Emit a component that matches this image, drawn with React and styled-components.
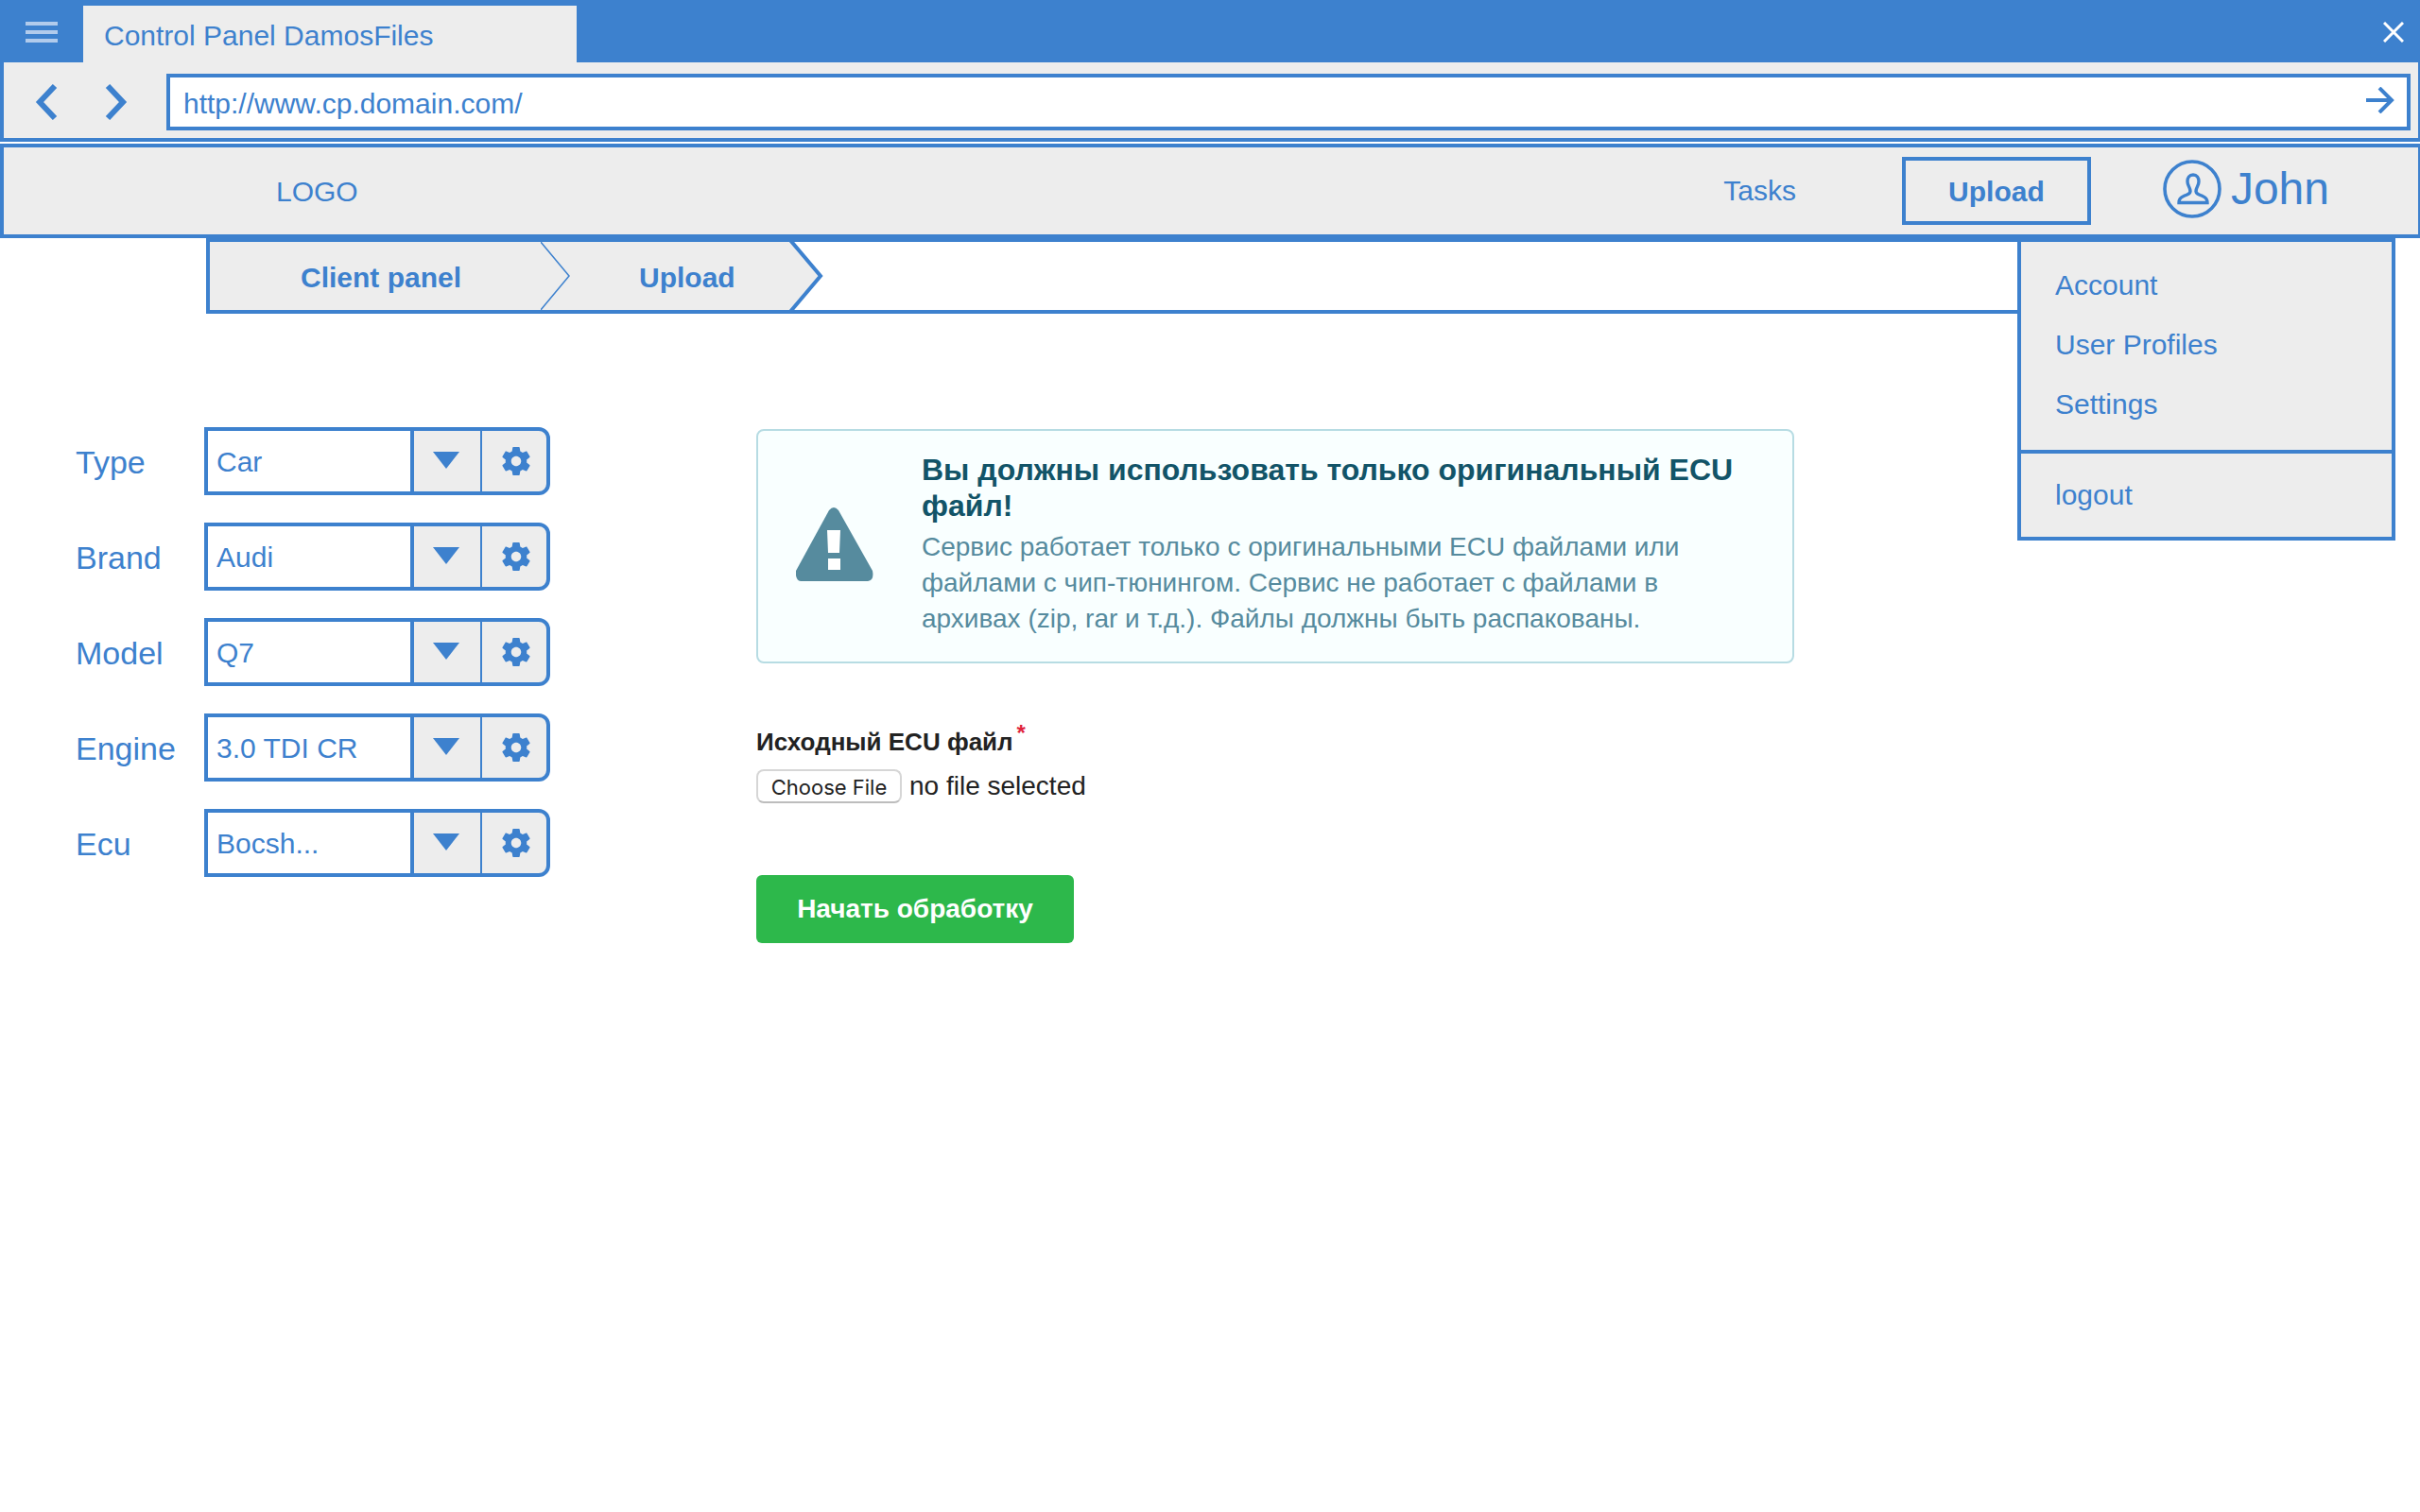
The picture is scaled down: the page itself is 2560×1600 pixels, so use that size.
import React from "react";
import styled, { createGlobalStyle } from "styled-components";

const blue = "#3d81ce";
const grey = "#ededed";

const GlobalStyle = createGlobalStyle`
  *, *::before, *::after { box-sizing: border-box; }
  body {
    margin: 0;
    background: #fff;
    color: ${blue};
    font: 30px/36px "Liberation Sans", Arial, sans-serif;
  }
  button, input, select { font: inherit; color: inherit; margin: 0; }
  button { cursor: pointer; }
  a { color: inherit; text-decoration: none; }
  svg { display: block; flex: none; }
  h1, h2, p, ul, ol { margin: 0; padding: 0; list-style: none; font-size: inherit; }
`;

const TitleBar = styled.div`
  display: flex;
  align-items: flex-end;
  height: 66px;
  background: ${blue};
`;

const IconButton = styled.button`
  display: flex;
  align-items: center;
  justify-content: center;
  width: ${(p) => p.$width}px;
  height: 60px;
  padding: 0;
  border: 0;
  background: transparent;
  color: ${(p) => p.$color || blue};
`;

const MenuButton = styled(IconButton)`
  height: 64px;
`;

const CloseButton = styled(MenuButton)`
  margin-left: auto;
`;

const BrowserTab = styled.div`
  display: flex;
  align-items: center;
  width: 522px;
  height: 60px;
  padding: 4px 22px 0;
  background: ${grey};
`;

const AddressBar = styled.div`
  display: flex;
  align-items: center;
  height: 84px;
  padding: 4px 8px 0;
  border: solid ${blue};
  border-width: 0 2px 4px 4px;
  background: ${grey};
`;

const HistoryButtons = styled.div`
  display: flex;
  width: 164px;
`;

const AddressField = styled.form`
  display: flex;
  flex: 1;
  height: 60px;
  border: 4px solid ${blue};
  background: #fff;
`;

const AddressInput = styled.input`
  flex: 1;
  min-width: 0;
  padding: 4px 14px 0;
  border: 0;
  outline: 0;
  background: transparent;
`;

const GoButton = styled(IconButton)`
  height: 48px;
`;

const SiteHeader = styled.header`
  position: relative;
  display: flex;
  align-items: center;
  height: 100px;
  margin-top: 2px;
  padding: 0 94px 0 288px;
  border: solid ${blue};
  border-width: 4px 2px 4px 4px;
  background: ${grey};
`;

const Logo = styled.a`
  margin-right: auto;
  padding-top: 2px;
`;

const HeaderNav = styled.nav`
  display: flex;
  align-items: center;
`;

const UploadButton = styled.button`
  width: 200px;
  height: 72px;
  margin: 0 76px 0 112px;
  padding: 2px 0 0;
  border: 4px solid ${blue};
  background: transparent;
  font-weight: bold;
`;

const UserButton = styled.button`
  display: flex;
  align-items: center;
  gap: 10px;
  padding: 0 0 4px;
  border: 0;
  background: transparent;
  font-size: 48px;
  line-height: 56px;
`;

const UserMenu = styled.div`
  position: absolute;
  z-index: 1;
  top: 96px;
  right: 24px;
  width: 400px;
  border: 4px solid ${blue};
  background: ${grey};
`;

const MenuGroup = styled.ul`
  display: flex;
  flex-direction: column;
  gap: 27px;
  padding: 28px 36px 30px;
  & + & {
    padding: 26px 36px;
    border-top: 4px solid ${blue};
  }
`;

const Breadcrumbs = styled.nav`
  margin: 0 400px 0 218px;
  border: 4px solid ${blue};
`;

const CrumbList = styled.ol`
  display: flex;
  height: 72px;
`;

const Crumb = styled.li`
  display: flex;
  font-weight: bold;
`;

const CrumbLink = styled.a`
  display: flex;
  align-items: center;
  padding: 4px 0 0 ${(p) => p.$left}px;
  width: ${(p) => p.$width}px;
  background: ${grey};
`;

const Main = styled.main`
  display: flex;
  align-items: flex-start;
  gap: 218px;
  padding: 120px 40px 40px 80px;
`;

const VehicleForm = styled.form`
  display: flex;
  flex-direction: column;
  gap: 29px;
  flex: none;
  width: 502px;
`;

const Field = styled.div`
  display: flex;
  align-items: center;
  justify-content: space-between;
`;

const FieldLabel = styled.label`
  padding-top: 2px;
  font-size: 34px;
  line-height: 40px;
`;

const Combo = styled.div`
  display: flex;
  width: 366px;
  height: 72px;
  border: 4px solid ${blue};
  border-radius: 0 12px 12px 0;
  background: ${grey};
  overflow: hidden;
`;

const SelectArea = styled.div`
  display: grid;
  grid-template-columns: 218px 70px;
`;

const Select = styled.select`
  grid-area: 1 / 1 / 2 / 3;
  padding: 2px 78px 0 9px;
  border: 0;
  outline: 0;
  appearance: none;
  background: linear-gradient(to right, #fff 214px, ${blue} 214px 218px, ${grey} 218px);
`;

const SelectArrow = styled.span`
  grid-area: 1 / 2;
  display: flex;
  align-items: center;
  justify-content: center;
  padding: 0 2px 2px 0;
  pointer-events: none;
`;

const GearButton = styled.button`
  display: flex;
  flex: 1;
  align-items: center;
  justify-content: center;
  padding: 0 0 0 4px;
  border: 0;
  border-left: 2px solid ${blue};
  background: transparent;
`;

const UploadForm = styled.form`
  flex: 0 1 1098px;
  margin-top: 2px;
`;

const Alert = styled.section`
  display: flex;
  align-items: center;
  gap: 51px;
  padding: 22px 60px 26px 40px;
  border: 2px solid #b7dce3;
  border-radius: 8px;
  background: #f9ffff;
  color: #568b9e;
  line-height: 38px;
`;

const AlertTitle = styled.h2`
  margin-bottom: 6px;
  color: #125468;
  font-size: 32px;
`;

const AlertText = styled.p`
  font-size: 28px;
`;

const FileField = styled.div`
  margin-top: 67px;
  color: #222;
`;

const FileLabel = styled.label`
  display: block;
  font-size: 26px;
  font-weight: bold;
  line-height: 32px;
`;

const Required = styled.sup`
  margin-left: 4px;
  color: #e0243c;
  font-size: 24px;
  line-height: 0;
`;

const FilePicker = styled.div`
  position: relative;
  display: flex;
  align-items: center;
  gap: 8px;
  margin-top: 13px;
  font-size: 28px;
`;

const FileInput = styled.input`
  position: absolute;
  inset: 0;
  width: 100%;
  opacity: 0;
`;

const FileButton = styled.span`
  width: 154px;
  height: 36px;
  border: 2px solid #d6d6d6;
  border-bottom-color: #bdbdbd;
  border-radius: 8px;
  background: #fff;
  font: 22px/34px Inter, sans-serif;
  text-align: center;
`;

const SubmitButton = styled.button`
  height: 72px;
  width: 336px;
  margin-top: 76px;
  padding: 0;
  border: 0;
  border-radius: 6px;
  background: #2db84b;
  color: #fff;
  font-size: 28px;
  font-weight: bold;
`;

const Chevron = ({ d }) => (
  <svg width="24" height="38" viewBox="0 0 24 38" fill="none" stroke={blue} strokeWidth="6" aria-hidden="true">
    <path d={d} />
  </svg>
);

const GearIcon = () => (
  <svg width="36" height="36" viewBox="0 0 24 24" fill={blue} aria-hidden="true">
    <path d="M19.43 12.98c.04-.32.07-.64.07-.98s-.03-.66-.07-.98l2.11-1.65c.19-.15.24-.42.12-.64l-2-3.46c-.12-.22-.39-.3-.61-.22l-2.49 1c-.52-.4-1.08-.73-1.69-.98l-.38-2.65C14.46 2.18 14.25 2 14 2h-4c-.25 0-.46.18-.49.42l-.38 2.65c-.61.25-1.17.59-1.69.98l-2.49-1c-.23-.09-.49 0-.61.22l-2 3.46c-.13.22-.07.49.12.64l2.11 1.65c-.04.32-.07.65-.07.98s.03.66.07.98l-2.11 1.65c-.19.15-.24.42-.12.64l2 3.46c.12.22.39.3.61.22l2.49-1c.52.4 1.08.73 1.69.98l.38 2.65c.03.24.24.42.49.42h4c.25 0 .46-.18.49-.42l.38-2.65c.61-.25 1.17-.59 1.69-.98l2.49 1c.23.09.49 0 .61-.22l2-3.46c.12-.22.07-.49-.12-.64l-2.11-1.65zM12 15.5c-1.93 0-3.5-1.57-3.5-3.5s1.57-3.5 3.5-3.5 3.5 1.57 3.5 3.5-1.57 3.5-3.5 3.5z" />
  </svg>
);

const AvatarIcon = () => (
  <svg width="62" height="62" viewBox="0 0 62 62" fill="none" stroke={blue} strokeWidth="3.6" aria-hidden="true">
    <circle cx="31" cy="31" r="29" />
    <path
      strokeWidth="3.4"
      d="M32 16C28 16 26 19 26 23C26 28 29 29 29 33.500C28.500 37 25 37 22 38.500C18 40 17 42 17 45.500H47C47 42 46 40 42 38.500C39 37 35.500 37 35 33.500C35 29 38 28 38 23C38 19 36 16 32 16Z"
    />
  </svg>
);

const WarningIcon = () => (
  <svg width="82" height="78" viewBox="0 0 82 78" aria-hidden="true">
    <path fill="#568b9e" d="M35 3Q40 -3 45 3L81 67Q83 77 76 78H5Q-1 77 0 67Z" />
    <path fill="#fff" d="M33 24h14l-1 24H34zM34 54h13v12H34z" />
  </svg>
);

const fields = [
  ["Type", "Car"],
  ["Brand", "Audi"],
  ["Model", "Q7"],
  ["Engine", "3.0 TDI CR"],
  ["Ecu", "Bocsh..."],
];

export default function App() {
  return (
    <>
      <GlobalStyle />
      <TitleBar>
        <MenuButton type="button" $width={88} $color="#b1cbec" aria-label="Menu">
          <svg width="34" height="22" viewBox="0 0 34 22" fill="currentColor" aria-hidden="true">
            <path d="M0 0h34v4H0zM0 9h34v4H0zM0 18h34v4H0z" />
          </svg>
        </MenuButton>
        <BrowserTab>Control Panel DamosFiles</BrowserTab>
        <CloseButton type="button" $width={56} $color="#fff" aria-label="Close">
          <svg width="22" height="22" viewBox="0 0 22 22" stroke="currentColor" strokeWidth="3" aria-hidden="true">
            <path d="M1 1l20 20M21 1L1 21" />
          </svg>
        </CloseButton>
      </TitleBar>
      <AddressBar>
        <HistoryButtons>
          <IconButton type="button" $width={74} aria-label="Back">
            <Chevron d="M21 2L5 19l16 17" />
          </IconButton>
          <IconButton type="button" $width={74} aria-label="Forward">
            <Chevron d="M3 2l16 17L3 36" />
          </IconButton>
        </HistoryButtons>
        <AddressField onSubmit={(e) => e.preventDefault()}>
          <AddressInput aria-label="Address" defaultValue="http://www.cp.domain.com/" />
          <GoButton $width={56} aria-label="Go">
            <svg width="30" height="28" viewBox="0 0 30 28" fill="none" stroke="currentColor" strokeWidth="4" aria-hidden="true">
              <path d="M0 14h27M14 1l13 13-13 13" />
            </svg>
          </GoButton>
        </AddressField>
      </AddressBar>
      <SiteHeader>
        <Logo href="#">LOGO</Logo>
        <HeaderNav>
          <a href="#tasks">Tasks</a>
          <UploadButton type="button">Upload</UploadButton>
          <UserButton type="button">
            <AvatarIcon />
            John
          </UserButton>
        </HeaderNav>
        <UserMenu>
          <MenuGroup>
            <li><a href="#account">Account</a></li>
            <li><a href="#profiles">User Profiles</a></li>
            <li><a href="#settings">Settings</a></li>
          </MenuGroup>
          <MenuGroup>
            <li><a href="#logout">logout</a></li>
          </MenuGroup>
        </UserMenu>
      </SiteHeader>
      <Breadcrumbs aria-label="Breadcrumb">
        <CrumbList>
          <Crumb>
            <CrumbLink href="#client" $left={96} $width={350}>Client panel</CrumbLink>
            <svg width="33" height="72" viewBox="0 0 33 72" aria-hidden="true">
              <path fill={grey} d="M0 0h33v72H0z" />
              <path fill="none" stroke={blue} strokeWidth="1.500" d="M0 0l30 36L0 72" />
            </svg>
          </Crumb>
          <Crumb>
            <CrumbLink href="#upload" $left={71} $width={229}>Upload</CrumbLink>
            <svg width="38" height="72" viewBox="0 0 38 72" aria-hidden="true">
              <path fill={grey} d="M0 0h3l30 36L3 72H0z" />
              <path fill="none" stroke={blue} strokeWidth="4" d="M1 -3l33 39L1 75" />
            </svg>
          </Crumb>
        </CrumbList>
      </Breadcrumbs>
      <Main>
        <VehicleForm>
          {fields.map(([label, value]) => (
            <Field key={label}>
              <FieldLabel htmlFor={label}>{label}</FieldLabel>
              <Combo>
                <SelectArea>
                  <Select id={label} defaultValue={value}>
                    <option>{value}</option>
                  </Select>
                  <SelectArrow>
                    <svg width="28" height="18" viewBox="0 0 28 18" fill={blue} aria-hidden="true">
                      <path d="M0 0h28L14 18z" />
                    </svg>
                  </SelectArrow>
                </SelectArea>
                <GearButton type="button" aria-label={`${label} settings`}>
                  <GearIcon />
                </GearButton>
              </Combo>
            </Field>
          ))}
        </VehicleForm>
        <UploadForm onSubmit={(e) => e.preventDefault()}>
          <Alert>
            <WarningIcon />
            <div>
              <AlertTitle>Вы должны использовать только оригинальный ECU файл!</AlertTitle>
              <AlertText>
                Сервис работает только с оригинальными ECU файлами или файлами с чип-тюнингом. Сервис не
                работает с файлами в архивах (zip, rar и т.д.). Файлы должны быть распакованы.
              </AlertText>
            </div>
          </Alert>
          <FileField>
            <FileLabel htmlFor="ecu-file">
              Исходный ECU файл<Required>*</Required>
            </FileLabel>
            <FilePicker>
              <FileButton>Choose File</FileButton>
              <span>no file selected</span>
              <FileInput id="ecu-file" type="file" />
            </FilePicker>
          </FileField>
          <SubmitButton>Начать обработку</SubmitButton>
        </UploadForm>
      </Main>
    </>
  );
}
